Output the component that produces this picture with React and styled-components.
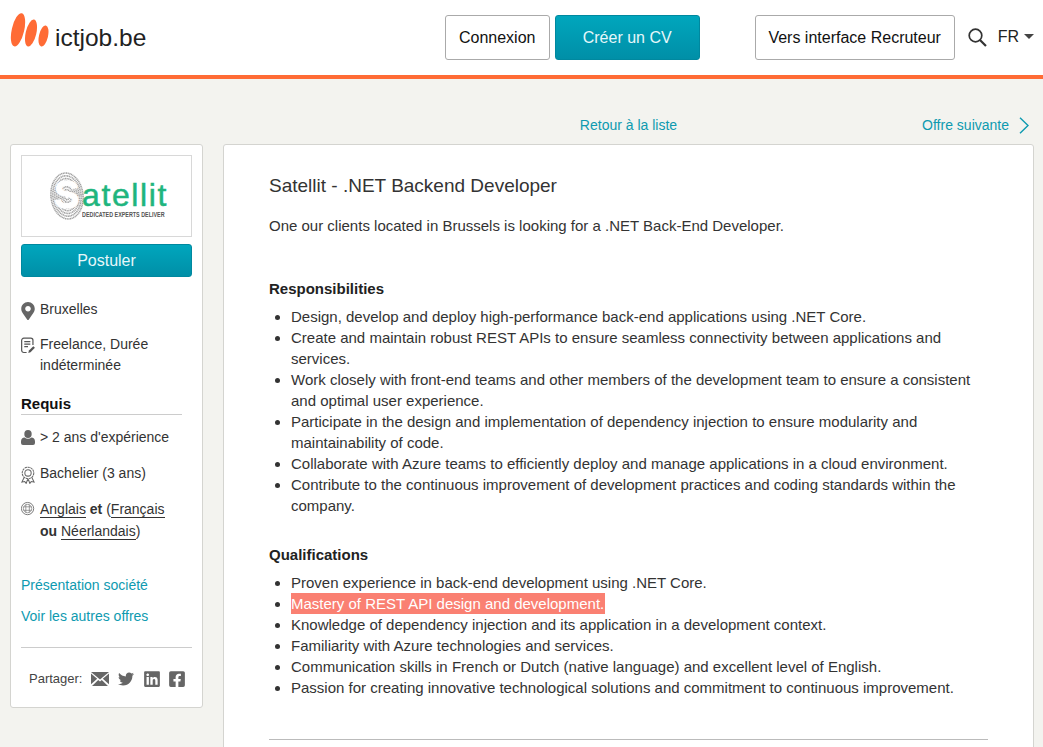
import React from 'react'
import styled, { createGlobalStyle } from 'styled-components'
import { FaTwitter, FaLinkedin, FaFacebookSquare, FaMapMarkerAlt } from 'react-icons/fa'

const GlobalStyle = createGlobalStyle`
  html, body {
    margin: 0;
    height: 100%;
    overflow: hidden;
    background: #f3f3ef;
    font-family: "Liberation Sans", Arial, sans-serif;
    color: #333;
  }
`

const Header = styled.header`
  display: flex;
  align-items: center;
  height: 75px;
  padding: 0 9px 0 10px;
  background: #fff;
  border-bottom: 4px solid #ff6b35;
`

const Brand = styled.div`
  display: flex;
  align-items: center;
  gap: 5px;
  margin-right: auto;
  svg {
    margin-bottom: 16px;
  }
`

const BrandName = styled.span`
  font-size: 24.5px;
  color: #222;
`

const HeaderButton = styled.a`
  box-sizing: border-box;
  display: flex;
  align-items: center;
  justify-content: center;
  width: ${({ $width }) => $width}px;
  height: 45px;
  margin-left: ${({ $gap }) => $gap}px;
  border-radius: 3px;
  font-size: 16px;
  border: 1px solid ${({ $primary }) => ($primary ? '#00889f' : '#aaa')};
  color: ${({ $primary }) => ($primary ? '#e6f7fa' : '#111')};
  background: ${({ $primary }) => ($primary ? 'linear-gradient(#00a6bd, #008fa7)' : '#fff')};
`

const SearchButton = styled.span`
  display: flex;
  margin-left: 13px;
`

const Lang = styled.span`
  display: flex;
  align-items: center;
  gap: 5px;
  margin-left: 11px;
  position: relative;
  top: -1px;
  font-size: 16px;
  color: #222;
`

const Caret = styled.i`
  width: 0;
  height: 0;
  border-style: solid;
  border-width: 5px 5px 0;
  border-color: #444 transparent transparent;
`

const Layout = styled.div`
  display: grid;
  grid-template-columns: 193px 811px;
  column-gap: 20px;
  padding: 36px 0 0 10px;
`

const Pager = styled.nav`
  grid-column: 2;
  display: grid;
  grid-template-columns: 1fr auto 1fr;
  align-items: center;
  height: 21px;
  margin-bottom: 8px;
  font-size: 14px;
  line-height: 21px;
`

const PagerLink = styled.a`
  grid-column: ${({ $col }) => $col};
  justify-self: ${({ $col }) => ($col === 3 ? 'end' : 'center')};
  margin-right: ${({ $col }) => ($col === 3 ? 5 : 0)}px;
  display: flex;
  align-items: center;
  gap: 10px;
  color: #0e9ab0;
`

const Sidebar = styled.aside`
  box-sizing: border-box;
  height: 564px;
  padding: 10px;
  background: #fff;
  border: 1px solid #d4d4d0;
  border-radius: 3px;
  font-size: 14px;
  line-height: 21px;
`

const LogoBox = styled.div`
  box-sizing: border-box;
  display: flex;
  align-items: center;
  justify-content: center;
  height: 82px;
  border: 1px solid #d8d8d8;
`

const ClientLogo = styled.div`
  position: relative;
  flex: none;
  width: 120px;
  height: 50px;
  margin-left: 5px;
  line-height: 1;
  white-space: nowrap;
`

const ClientInitial = styled.span`
  position: absolute;
  left: 5px;
  top: 5px;
  font-size: 38px;
  font-weight: 700;
  color: #fff;
  -webkit-text-stroke: 1px #fff;
`

const ClientName = styled.span`
  position: absolute;
  left: 33px;
  top: 9px;
  font-size: 32px;
  line-height: 30px;
  letter-spacing: 1.6px;
  color: #1fb57e;
  -webkit-text-stroke: 0.5px #1fb57e;
`

const ClientTagline = styled.span`
  position: absolute;
  left: 33px;
  top: 40.1px;
  font-size: 7px;
  font-weight: 700;
  color: #555;
  transform: scaleX(0.77);
  transform-origin: left;
`

const ApplyButton = styled.a`
  box-sizing: border-box;
  display: flex;
  align-items: center;
  justify-content: center;
  height: 33px;
  margin-top: 7px;
  border: 1px solid #00889f;
  border-radius: 3px;
  font-size: 16px;
  color: #e6f7fa;
  background: linear-gradient(#00a6bd, #008fa7);
`

const Facts = styled.div`
  display: flex;
  flex-direction: column;
  width: 161px;
  gap: ${({ $gap }) => $gap}px;
  margin-top: ${({ $top }) => $top}px;
`

const Fact = styled.div`
  display: flex;
  gap: 5px;
  margin-top: ${({ $shift }) => $shift || 0}px;
  line-height: ${({ $line }) => $line || 21}px;
`

const FactIcon = styled.span`
  flex: 0 0 14px;
  min-width: 0;
  display: flex;
  justify-content: center;
  color: #666;
  padding-top: 3px;
`

const SectionTitle = styled.h4`
  box-sizing: border-box;
  width: 161px;
  height: 22px;
  margin: 17px 0 0;
  border-bottom: 1px solid #ccc;
  font-size: 15px;
  line-height: 21px;
  color: #111;
`

const Lng = styled.span`
  border-bottom: 1px solid #333;
`

const SideLinks = styled.div`
  display: flex;
  flex-direction: column;
  gap: 10px;
  margin-top: 33px;
  color: #0e9ab0;
`

const Share = styled.div`
  display: flex;
  align-items: center;
  margin-top: 20px;
  padding: 20px 0 0 8px;
  border-top: 1px solid #ccc;
  font-size: 13px;
  color: #444;
  svg {
    color: #666;
  }
`

const ShareLabel = styled.span`
  margin-right: 8.5px;
`

const ShareIcon = styled.span`
  display: flex;
  margin-right: ${({ $gap }) => $gap}px;
`

const Main = styled.main`
  box-sizing: border-box;
  height: 700px;
  padding: 30px 45px 0;
  background: #fff;
  border: 1px solid #d4d4d0;
  border-radius: 3px;
  font-size: 15px;
  line-height: 21px;
`

const Title = styled.h1`
  margin: 0;
  font-size: 19px;
  font-weight: 400;
  line-height: 21px;
`

const Intro = styled.p`
  margin: 19px 0 42px;
`

const Heading = styled.h3`
  margin: 0 0 7px;
  font-size: 15px;
  line-height: 21px;
  color: #222;
`

const List = styled.ul`
  margin: 0 0 ${({ $bottom }) => $bottom}px;
  padding-left: 22px;
`

const Highlight = styled.span`
  display: inline-block;
  padding-right: 1px;
  background: #fa8072;
  color: #fff;
`

const Rule = styled.hr`
  margin: 0;
  border: 0;
  border-top: 1px solid #bbb;
`

const LogoMark = () => (
  <svg width="40" height="34" viewBox="0 0 40 34" aria-hidden="true">
    <g fill="#ff6b35">
      <ellipse cx="8" cy="16.8" rx="6.2" ry="17" transform="rotate(13 8 16.8)" />
      <ellipse cx="21" cy="20" rx="5.3" ry="13.8" transform="rotate(13 21 20)" />
      <ellipse cx="33.5" cy="23" rx="4.5" ry="10.8" transform="rotate(13 33.5 23)" />
    </g>
  </svg>
)

const SearchIcon = () => (
  <svg width="19" height="19" viewBox="0 0 19 19" fill="none" stroke="#333" aria-hidden="true">
    <circle cx="7.5" cy="7.5" r="6.3" strokeWidth="1.7" />
    <path d="M12 12l6 6" strokeWidth="2.2" />
  </svg>
)

const Chevron = () => (
  <svg width="10" height="17" viewBox="0 0 10 17" fill="none" stroke="#0e9ab0" strokeWidth="1.4" aria-hidden="true">
    <path d="M1 .7l8 7.8-8 7.8" />
  </svg>
)

const ridges = [1, 0.88, 0.76, 0.64, 0.52, 0.4, 0.28, 0.16]

const Fingerprint = () => (
  <svg width="36" height="50" viewBox="0 0 36 50" aria-hidden="true">
    <g fill="none" stroke="#a2a2a2" strokeWidth="1.6" strokeDasharray="1.2 .5" transform="rotate(-6 18 25)">
      {ridges.map((r) => <ellipse key={r} cx="18" cy="25" rx={16 * r} ry={23 * r} />)}
    </g>
  </svg>
)

const UserIcon = () => (
  <svg width="14" height="15" viewBox="0 0 14 15" fill="#666" aria-hidden="true">
    <ellipse cx="7" cy="4" rx="3.7" ry="4" />
    <path d="M0 11.5C0 9 1.6 7.8 3.6 7.6 4.5 8.4 5.7 8.8 7 8.8s2.500-.4 3.400-1.200C12.400 7.800 14 9 14 11.500V13a2 2 0 0 1-2 2H2a2 2 0 0 1-2-2z" />
  </svg>
)

const DocIcon = () => (
  <svg width="15" height="17" viewBox="0 0 15 17" fill="none" stroke="#555" strokeWidth="1.3" aria-hidden="true">
    <path d="M6 16H3a2.300 2.300 0 0 1-2.300-2.300V3A2.300 2.300 0 0 1 3 .7h7.500A2.300 2.300 0 0 1 12.800 3v5" />
    <path d="M3.500 4.300h6.500M3.500 7h6.500M3.500 9.700h4" />
    <path d="M7.800 16.500l.7-2.700 4.700-4.600 1.700 1.700-4.700 4.800z" fill="#555" stroke="none" />
  </svg>
)

const AwardIcon = () => (
  <svg width="15" height="18" viewBox="0 0 15 18" fill="none" stroke="#666" strokeWidth="1.1" aria-hidden="true">
    <circle cx="7.500" cy="6.800" r="6.200" strokeDasharray="2.500 .6" />
    <circle cx="7.500" cy="6.800" r="3.400" />
    <path d="M3.500 11.500L1 16.500l3-.5L5.500 18 7.200 13.500M11.500 11.500l2.500 5-3-.5-1.500 2L7.800 13.500" />
  </svg>
)

const GlobeIcon = () => (
  <svg width="16" height="16" viewBox="0 0 16 16" fill="none" stroke="#777" strokeWidth=".8" aria-hidden="true">
    <circle cx="7.500" cy="7.500" r="7" strokeWidth="1.100" />
    <circle cx="7.500" cy="7.500" r="4.800" />
    <path d="M5.500 3v9M9.500 3v9M3 5.500h9M3 9.500h9" />
  </svg>
)

const MailIcon = () => (
  <svg width="18" height="14" viewBox="0 0 18 14" aria-hidden="true">
    <path d="M0 0h18L9 7.500z" fill="#666" />
    <path d="M0 1.600v10.600L6.200 6.700zM18 1.600v10.600L11.800 6.700z" fill="#666" />
    <path d="M1 14h16l-6.200-6L9 9.400 7.200 8z" fill="#666" />
  </svg>
)

const responsibilities = [
  'Design, develop and deploy high-performance back-end applications using .NET Core.',
  'Create and maintain robust REST APIs to ensure seamless connectivity between applications and services.',
  'Work closely with front-end teams and other members of the development team to ensure a consistent and optimal user experience.',
  'Participate in the design and implementation of dependency injection to ensure modularity and maintainability of code.',
  'Collaborate with Azure teams to efficiently deploy and manage applications in a cloud environment.',
  'Contribute to the continuous improvement of development practices and coding standards within the company.',
]

const App = () => {
  return (
    <>
      <GlobalStyle />
      <Header>
        <Brand>
          <LogoMark />
          <BrandName>ictjob.be</BrandName>
        </Brand>
        <HeaderButton $width={105} $gap={0}>Connexion</HeaderButton>
        <HeaderButton $width={145} $gap={5} $primary>Créer un CV</HeaderButton>
        <HeaderButton $width={200} $gap={55}>Vers interface Recruteur</HeaderButton>
        <SearchButton><SearchIcon /></SearchButton>
        <Lang>FR <Caret /></Lang>
      </Header>

      <Layout>
        <Pager>
          <PagerLink $col={2}>Retour à la liste</PagerLink>
          <PagerLink $col={3}>Offre suivante <Chevron /></PagerLink>
        </Pager>

        <Sidebar>
          <LogoBox>
            <ClientLogo>
              <Fingerprint />
              <ClientInitial>S</ClientInitial>
              <ClientName>atellit</ClientName>
              <ClientTagline>DEDICATED EXPERTS DELIVER</ClientTagline>
            </ClientLogo>
          </LogoBox>
          <ApplyButton>Postuler</ApplyButton>

          <Facts $top={22} $gap={14}>
            <Fact>
              <FactIcon><FaMapMarkerAlt size={18} /></FactIcon>
              <span>Bruxelles</span>
            </Fact>
            <Fact>
              <FactIcon><DocIcon /></FactIcon>
              <span>Freelance, Durée indéterminée</span>
            </Fact>
          </Facts>

          <SectionTitle>Requis</SectionTitle>

          <Facts $top={12} $gap={15}>
            <Fact>
              <FactIcon><UserIcon /></FactIcon>
              <span>&gt; 2 ans d'expérience</span>
            </Fact>
            <Fact>
              <FactIcon><AwardIcon /></FactIcon>
              <span>Bachelier (3 ans)</span>
            </Fact>
            <Fact $line={22} $shift={-1}>
              <FactIcon><GlobeIcon /></FactIcon>
              <span>
                <Lng>Anglais</Lng> <b>et</b> (<Lng>Français</Lng> <b>ou</b> <Lng>Néerlandais</Lng>)
              </span>
            </Fact>
          </Facts>

          <SideLinks>
            <span>Présentation société</span>
            <span>Voir les autres offres</span>
          </SideLinks>

          <Share>
            <ShareLabel>Partager:</ShareLabel>
            <ShareIcon $gap={9}><MailIcon /></ShareIcon>
            <ShareIcon $gap={9}><FaTwitter size={16} /></ShareIcon>
            <ShareIcon $gap={7}><FaLinkedin size={18} /></ShareIcon>
            <ShareIcon $gap={0}><FaFacebookSquare size={18} /></ShareIcon>
          </Share>
        </Sidebar>

        <Main>
          <Title>Satellit - .NET Backend Developer</Title>
          <Intro>One our clients located in Brussels is looking for a .NET Back-End Developer.</Intro>

          <Heading>Responsibilities</Heading>
          <List $bottom={28}>
            {responsibilities.map((item) => <li key={item}>{item}</li>)}
          </List>

          <Heading>Qualifications</Heading>
          <List $bottom={41}>
            <li>Proven experience in back-end development using .NET Core.</li>
            <li><Highlight>Mastery of REST API design and development.</Highlight></li>
            <li>Knowledge of dependency injection and its application in a development context.</li>
            <li>Familiarity with Azure technologies and services.</li>
            <li>Communication skills in French or Dutch (native language) and excellent level of English.</li>
            <li>Passion for creating innovative technological solutions and commitment to continuous improvement.</li>
          </List>
          <Rule />
        </Main>
      </Layout>
    </>
  )
}

export default App
